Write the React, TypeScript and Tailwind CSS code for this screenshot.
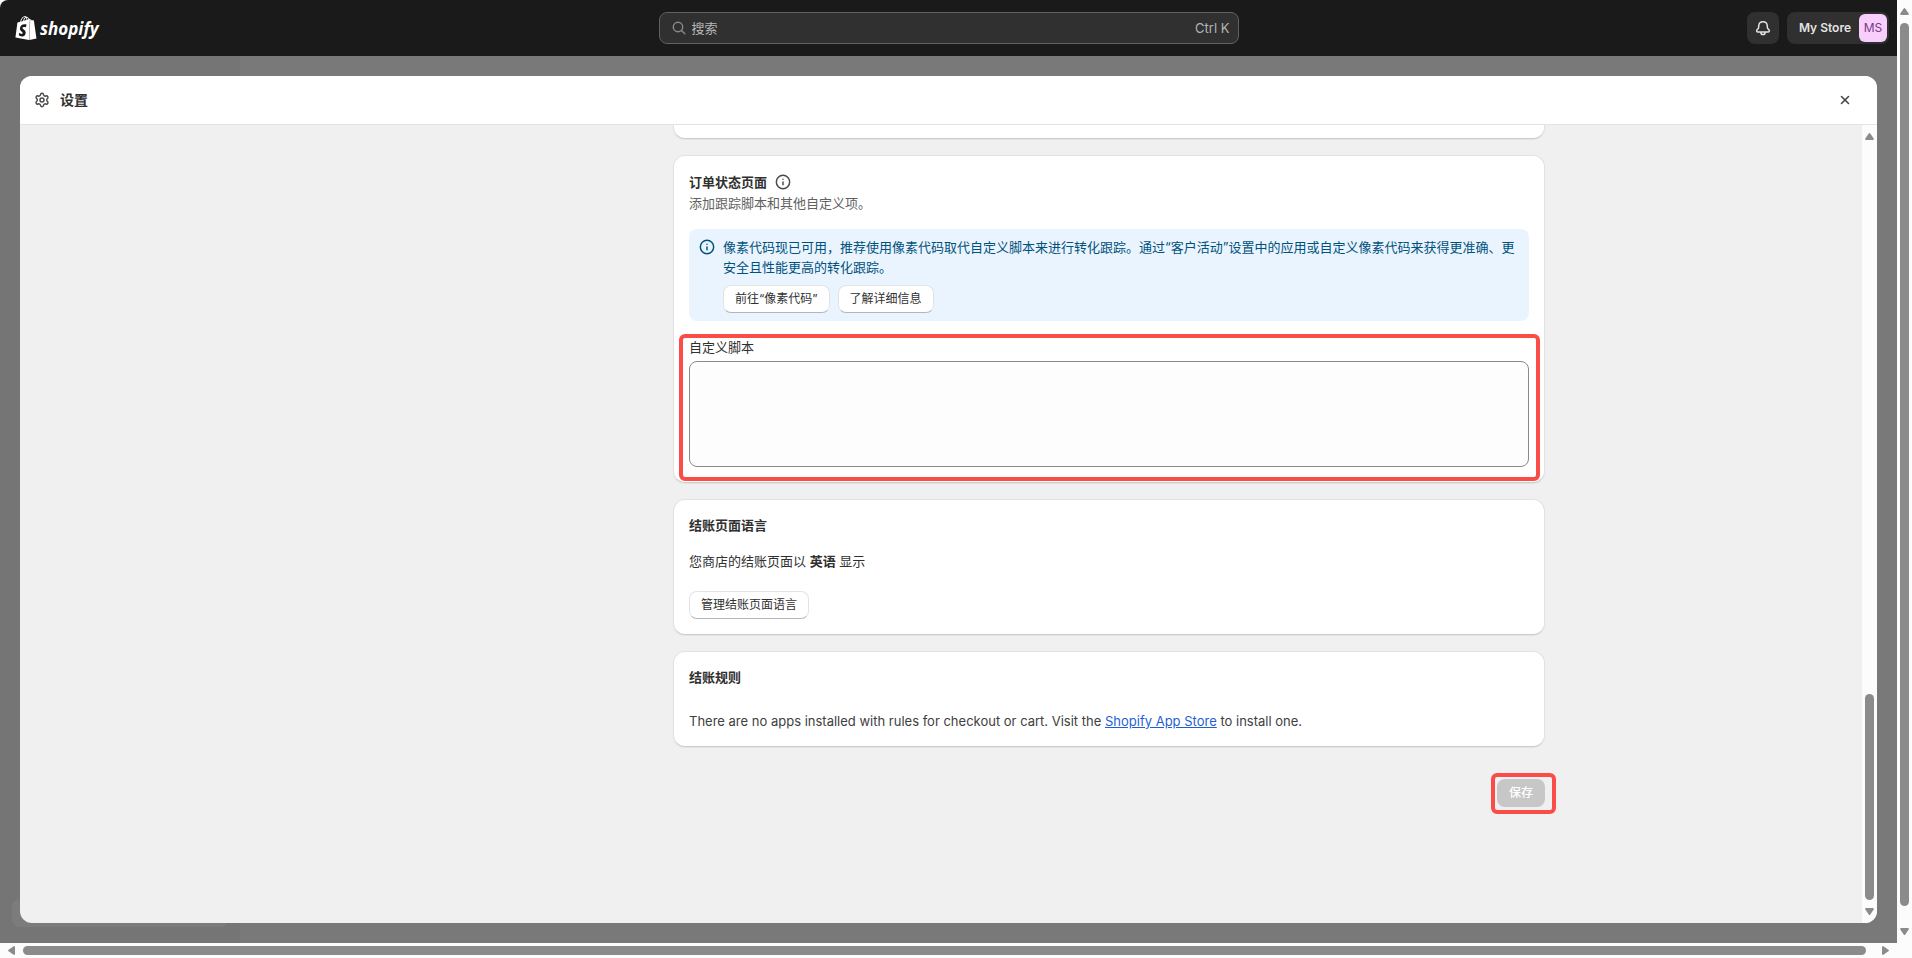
import React from "react"
import { Info, Settings, X } from "lucide-react"
import { SiShopify } from "react-icons/si"

const Card: React.FC<{ className?: string; children?: React.ReactNode }> = ({ className = "", children }) => {
    return (
        <section className={`flex flex-col items-start rounded-xl border border-[#e1e1e1] border-b-[#cccccc] bg-white shadow-[0_1px_1px_rgba(0,0,0,0.05)] p-[15px] ${className}`}>
            {children}
        </section>
    )
}

const SmallButton: React.FC<{ children: React.ReactNode }> = ({ children }) => {
    return (
        <button type="button" className="h-7 rounded-lg border border-[#e3e3e3] border-b-[#b5b5b5] bg-white px-[11px] text-xs leading-4 text-[#303030]">
            {children}
        </button>
    )
}

const Arrow: React.FC<{ className?: string }> = ({ className = "" }) => (
    <svg viewBox="0 0 9 7" className={`h-[7px] w-[9px] shrink-0 fill-[#8b8b8b] ${className}`}>
        <path d="M3.7.6a1 1 0 0 1 1.6 0l3.4 5a.9.9 0 0 1-.8 1.4H1.100a.9.9 0 0 1-.8-1.400z" />
    </svg>
)

const SearchIcon = () => (
    <svg viewBox="0 0 14 14" className="h-[14px] w-[14px] shrink-0" fill="none" stroke="#8a8a8a" strokeWidth={1.4} strokeLinecap="round">
        <circle cx="6" cy="6" r="4.700" />
        <path d="m9.500 9.500 3.300 3.300" />
    </svg>
)

const BellIcon = () => (
    <svg viewBox="0 0 16 16" className="h-4 w-4" fill="none" stroke="#e3e3e3" strokeWidth={1.5} strokeLinejoin="round">
        <path d="M8 1.750c-2.400 0-4.100 1.700-4.250 4l-.15 1.700c-.05.5-.25.9-.6 1.300l-1.050 1.150c-.7.8-.2 2.100.95 2.100h10.200c1.150 0 1.650-1.300.95-2.100L13 8.750c-.35-.4-.55-.8-.6-1.300l-.15-1.700c-.15-2.300-1.850-4-4.250-4z" />
        <path d="M5.900 12v.4a2.100 2.100 0 0 0 4.200 0V12" />
    </svg>
)

const TopBar = () => {
    return (
        <header className="grid h-14 shrink-0 grid-cols-[1fr_580px_1fr] items-center rounded-tl-lg bg-[#1a1a1a] px-2">
            <a href="#" className="ml-1.5 flex items-center gap-0.5 text-white">
                <SiShopify className="h-6 w-6" />
                <span className="pt-0.5 font-['Open_Sans','Noto_Sans',sans-serif] text-[17px] font-bold italic leading-6">shopify</span>
            </a>
            <label className="flex h-8 items-center rounded-lg border border-[#616161] bg-[#303030] px-3">
                <SearchIcon />
                <input
                    type="text"
                    placeholder="搜索"
                    aria-label="搜索"
                    className="ml-1.5 min-w-0 flex-1 bg-transparent text-[13px] leading-5 text-[#e3e3e3] outline-none placeholder:text-[#b5b5b5]"
                />
                <span className="mr-[-4px] text-[13px] leading-5 text-[#b5b5b5]">Ctrl K</span>
            </label>
            <div className="flex items-center justify-end gap-2">
                <button type="button" aria-label="通知" className="flex h-8 w-8 items-center justify-center rounded-lg bg-[#303030]">
                    <BellIcon />
                </button>
                <button type="button" className="flex h-8 items-center gap-2 rounded-lg bg-[#303030] pl-3 pr-0.5 text-xs font-semibold text-[#e3e3e3]">
                    My Store
                    <span className="flex h-7 w-7 items-center justify-center rounded-md bg-[#f8cffc] text-xs font-normal text-[#7a3a86]">MS</span>
                </button>
            </div>
        </header>
    )
}

const OrderStatusCard = () => {
    return (
        <Card className="relative">
            <h2 className="flex items-center gap-2 text-[13px] font-bold leading-[22px]">
                订单状态页面
                <Info size={16} strokeWidth={2.2} className="text-[#4a4a4a]" />
            </h2>
            <p className="text-[13px] leading-5 text-[#616161]">添加跟踪脚本和其他自定义项。</p>

            {/* pixel banner */}
            <div className="mt-4 flex w-full gap-1.5 rounded-lg bg-[#eaf4ff] p-2 text-[#00527c]">
                <div className="flex h-5 w-5 shrink-0 items-center justify-center">
                    <Info size={16} strokeWidth={2.2} />
                </div>
                <div>
                    <p className="text-[13px] leading-5">
                        像素代码现已可用，推荐使用像素代码取代自定义脚本来进行转化跟踪。通过“客户活动”设置中的应用或自定义像素代码来获得更准确、更安全且性能更高的转化跟踪。
                    </p>
                    <div className="mt-2 flex gap-2">
                        <SmallButton>前往“像素代码”</SmallButton>
                        <SmallButton>了解详细信息</SmallButton>
                    </div>
                </div>
            </div>

            <label htmlFor="script" className="mt-4 text-[13px] leading-5">自定义脚本</label>
            <textarea id="script" className="mt-1 block h-[106px] w-full resize-none rounded-lg border border-[#8a8a8a] bg-[#fdfdfd] p-2 text-[13px] outline-none" />

            {/* highlight */}
            <div className="pointer-events-none absolute top-[178px] right-1 bottom-px left-[5px] rounded-md border-4 border-[#fa4d48]" />
        </Card>
    )
}

const SettingsContent = () => {
    return (
        <div className="mx-auto flex w-full max-w-[1208px] justify-end">
            <div className="flex w-full max-w-[872px] flex-col gap-4">
                {/* end of the section scrolled out above */}
                <div className="h-[14px] rounded-b-xl border border-t-0 border-[#e1e1e1] border-b-[#cccccc] bg-white shadow-[0_1px_1px_rgba(0,0,0,0.05)]" />
                <OrderStatusCard />
                <Card>
                    <h2 className="text-[13px] font-bold leading-5">结账页面语言</h2>
                    <p className="mt-4 text-[13px] leading-5">
                        您商店的结账页面以 <strong className="font-bold">英语</strong> 显示
                    </p>
                    <div className="mt-5 flex">
                        <SmallButton>管理结账页面语言</SmallButton>
                    </div>
                </Card>
                <Card>
                    <h2 className="text-[13px] font-bold leading-5">结账规则</h2>
                    <p className="mt-6 text-[13px] leading-5 text-[#404040]">
                        There are no apps installed with rules for checkout or cart. Visit the{" "}
                        <a href="#" className="text-[#1f5fd6] underline">Shopify App Store</a> to install one.
                    </p>
                </Card>
                <div className="mt-4 flex justify-end">
                    <div className="relative">
                        <button type="button" disabled className="block h-7 w-12 rounded-lg bg-[#c7c7c7] text-xs font-medium text-white">保存</button>
                        <div className="pointer-events-none absolute -top-1.5 -right-[11px] -bottom-[7px] -left-1.5 rounded-md border-4 border-[#fa4d48]" />
                    </div>
                </div>
            </div>
        </div>
    )
}

const App: React.FC = () => {
    return (
        <div className="flex h-screen flex-col overflow-hidden bg-[#fcfcfc] font-[Inter,'Noto_Sans_CJK_SC',sans-serif] text-[#303030]">
            <div className="flex min-h-0 flex-1">
                <div className="flex min-w-0 flex-1 flex-col">
                    <TopBar />
                    <main className="relative flex min-h-0 flex-1 bg-[#797979] p-5">
                        {/* dimmed nav behind the modal */}
                        <div className="absolute inset-y-0 left-0 flex w-60 flex-col justify-end bg-[#757575] px-3 py-4">
                            <div className="h-7 rounded-lg bg-[#7c7c7c]" />
                        </div>

                        <div role="dialog" aria-label="设置" className="relative flex min-w-0 flex-1 flex-col overflow-hidden rounded-xl bg-[#f0f0f0]">
                            <div className="flex h-[49px] shrink-0 items-center justify-between border-b border-[#e3e3e3] bg-white pr-[25px] pl-[14px]">
                                <h1 className="flex items-center gap-[10px] text-sm font-bold leading-5">
                                    <Settings size={16} strokeWidth={2.2} className="text-[#4a4a4a]" />
                                    设置
                                </h1>
                                <button type="button" aria-label="关闭">
                                    <X size={14} strokeWidth={2.8} className="text-[#4a4a4a]" />
                                </button>
                            </div>
                            <div className="flex min-h-0 flex-1">
                                <div className="min-w-0 flex-1 overflow-hidden">
                                    <SettingsContent />
                                </div>
                                <div className="flex w-[15px] flex-col items-center bg-[#fcfcfc] py-2">
                                    <Arrow />
                                    <div className="flex-[553]" />
                                    <div className="w-[9px] flex-[206] rounded-full bg-[#8b8b8b]" />
                                    <Arrow className="mt-2 rotate-180" />
                                </div>
                            </div>
                        </div>
                    </main>
                </div>
                {/* page scrollbars */}
                <div className="flex w-[15px] flex-col items-center py-2">
                    <Arrow />
                    <div className="mt-2 w-[9px] flex-[883] rounded-full bg-[#8b8b8b]" />
                    <div className="flex-[22]" />
                    <Arrow className="rotate-180" />
                </div>
            </div>
            <div className="flex h-[15px] shrink-0 items-center pr-[22px] pl-[7px]">
                <Arrow className="-rotate-90" />
                <div className="ml-[7px] h-[9px] flex-[1843] rounded-full bg-[#8b8b8b]" />
                <div className="flex-[15]" />
                <Arrow className="rotate-90" />
            </div>
        </div>
    )
}

export default App
